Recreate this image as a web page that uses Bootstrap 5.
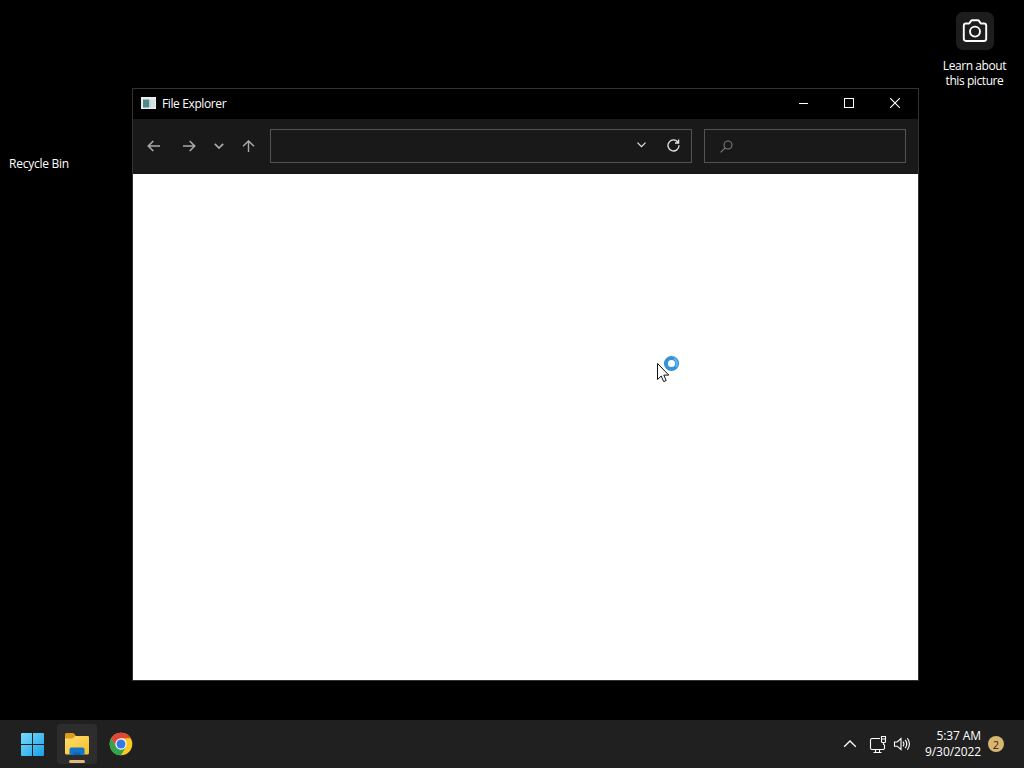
<!DOCTYPE html>
<html lang="en">
<head>
    <meta charset="UTF-8">
    <meta name="viewport" content="width=device-width, initial-scale=1.0">
    <title>Desktop - File Explorer</title>
    <!-- Bootstrap CSS -->
    <link href="https://cdn.jsdelivr.net/npm/bootstrap@5.3.0/dist/css/bootstrap.min.css" rel="stylesheet">
    <!-- Custom CSS -->
    <style>
        body {
            background-color: #000;
            color: #fff;
            font-family: "Open Sans", "Noto Sans", sans-serif;
            font-size: 12px;
            line-height: 15px;
        }
        svg {
            display: block;
            flex: none;
        }
        /* Desktop shortcuts */
        .desk-item {
            position: absolute;
            white-space: nowrap;
        }
        #recycleBin {
            left: 9px;
            top: 156px;
            letter-spacing: -0.25px;
        }
        #spotlight {
            left: 934px;
            top: 12px;
            width: 81px;
            letter-spacing: -0.42px;
        }
        .spot-tile {
            width: 38px;
            height: 38px;
            border-radius: 7px;
            background-color: #1d1d1d;
            margin-bottom: 8px;
        }
        /* Explorer window */
        #explorer {
            position: absolute;
            left: 132px;
            top: 88px;
            width: 787px;
            height: 593px;
            border: 1px solid #333;
        }
        .title-bar {
            height: 30px;
            padding-left: 8px;
            background-color: #000;
        }
        .title-icon {
            margin-bottom: 2px;
        }
        .title-text {
            margin-left: 6px;
            margin-bottom: 2px;
            letter-spacing: -0.38px;
        }
        .win-btn {
            width: 46px;
            height: 30px;
            padding-bottom: 2px;
        }
        .tool-bar {
            height: 55px;
            padding: 0 12px 1px 3px;
            background-color: #191919;
        }
        .nav-btn {
            width: 35px;
            height: 34px;
        }
        .nav-btn-sm {
            width: 25px;
        }
        .field-box {
            height: 34px;
            border: 1px solid #535353;
        }
        .address-box {
            width: 422px;
            margin-left: 4px;
            padding-right: 11px;
            padding-bottom: 2px;
            gap: 21px;
        }
        .search-box {
            width: 202px;
            padding-left: 15px;
        }
        #pointer {
            position: absolute;
            left: 655px;
            top: 354px;
        }
        /* Taskbar */
        .task-bar {
            height: 48px;
            background-color: #202020;
            padding-left: 13px;
            padding-right: 20px;
        }
        .task-btn {
            width: 40px;
            height: 40px;
            border-radius: 4px;
        }
        .task-btn.running {
            background-color: #2d2d2d;
        }
        .clock-text {
            line-height: 16px;
            width: 69px;
            letter-spacing: -0.1px;
        }
        .notif-count {
            width: 16px;
            height: 16px;
            margin-left: 7px;
            background-color: #d9b670;
            color: #2b2418;
            font-size: 11px;
        }
    </style>
</head>
<body class="vh-100 overflow-hidden d-flex flex-column">

    <!-- Desktop -->
    <main class="flex-grow-1">
        <div class="desk-item" id="recycleBin">Recycle Bin</div>

        <div class="desk-item d-flex flex-column align-items-center text-center" id="spotlight">
            <div class="spot-tile d-flex align-items-center justify-content-center">
                <svg width="26" height="24" viewBox="0 0 26 24" fill="none" stroke="#fff" stroke-width="1.9" stroke-linejoin="round">
                    <path d="M4 4.5H7.2L9 1.9Q9.4 1.3 10.2 1.3H15.8Q16.6 1.3 17 1.9L18.8 4.5H22Q24.2 4.5 24.2 6.7V19.8Q24.2 22 22 22H4Q1.8 22 1.8 19.8V6.7Q1.8 4.5 4 4.5Z"/>
                    <circle cx="13" cy="12.6" r="5"/>
                </svg>
            </div>
            <div>Learn about<br>this picture</div>
        </div>

        <!-- File Explorer window -->
        <div class="d-flex flex-column" id="explorer">
            <div class="title-bar d-flex align-items-center">
                <svg class="title-icon" width="15" height="12" viewBox="0 0 15 12">
                    <rect width="15" height="12" fill="#e9edf0"/>
                    <rect x="2" y="2.5" width="6" height="8" fill="#4f8b83"/>
                    <rect x="8" y="2.5" width="2.5" height="8" fill="#bcd5dd"/>
                    <rect x="11" y="2.5" width="3" height="8" fill="#d6dddf"/>
                </svg>
                <span class="title-text">File Explorer</span>
                <div class="d-flex ms-auto">
                    <div class="win-btn d-flex align-items-center justify-content-center">
                        <svg width="10" height="10"><path d="M1 5.5H11" stroke="#fff"/></svg>
                    </div>
                    <div class="win-btn d-flex align-items-center justify-content-center">
                        <svg width="10" height="10"><rect x=".5" y=".5" width="9" height="9" fill="none" stroke="#fff"/></svg>
                    </div>
                    <div class="win-btn d-flex align-items-center justify-content-center">
                        <svg width="10" height="10"><path d="M0 0L10 10M10 0L0 10" stroke="#fff" stroke-width="1.1"/></svg>
                    </div>
                </div>
            </div>

            <div class="tool-bar d-flex align-items-center">
                <div class="nav-btn d-flex align-items-center justify-content-center">
                    <svg width="14" height="12" viewBox="0 0 14 12" fill="none" stroke="#aaa" stroke-width="1.6"><path d="M13 6H1.5M6.3 1L1.3 6L6.3 11"/></svg>
                </div>
                <div class="nav-btn d-flex align-items-center justify-content-center">
                    <svg width="14" height="12" viewBox="0 0 14 12" fill="none" stroke="#aaa" stroke-width="1.6"><path d="M1 6H12.5M7.7 1L12.7 6L7.7 11"/></svg>
                </div>
                <div class="nav-btn nav-btn-sm d-flex align-items-center justify-content-center">
                    <svg width="10" height="6" viewBox="0 0 10 6" fill="none" stroke="#aaa" stroke-width="1.7"><path d="M.8 .8L5 5L9.2 .8"/></svg>
                </div>
                <div class="nav-btn d-flex align-items-center justify-content-center">
                    <svg width="13" height="12" viewBox="0 0 13 12" fill="none" stroke="#aaa" stroke-width="1.4"><path d="M6.5 12V1M1 6.3L6.5 .9L12 6.3"/></svg>
                </div>
                <div class="field-box address-box d-flex align-items-center justify-content-end">
                    <svg width="9" height="6" viewBox="0 0 9 6" fill="none" stroke="#e4e4e4" stroke-width="1.2"><path d="M.5 .7L4.5 4.7L8.5 .7"/></svg>
                    <svg width="13" height="13" viewBox="0 0 13 13" fill="none" stroke="#e4e4e4" stroke-width="1.3"><path d="M11.2 3.6A5.5 5.5 0 1 0 12 6.3M11.6 .4V4H8"/></svg>
                </div>
                <div class="field-box search-box d-flex align-items-center ms-auto">
                    <svg width="13" height="13" viewBox="0 0 13 13" fill="none" stroke="#7c7c7c" stroke-width="1.1"><circle cx="8" cy="5" r="4"/><path d="M5.2 7.8L.6 12.4"/></svg>
                </div>
            </div>

            <div class="bg-white flex-grow-1"></div>
        </div>

        <!-- Mouse pointer with busy ring -->
        <svg id="pointer" width="28" height="30" viewBox="0 0 28 30">
            <circle cx="16.5" cy="9.5" r="5.6" fill="none" stroke="#3593dc" stroke-width="4"/>
            <path d="M19 4.7A5.4 5.4 0 0 1 21 12.6" fill="none" stroke="#62b5ee" stroke-width="2"/>
            <path d="M2.5 9.5V25.5L6.2 22L8.7 27.6L11.2 26.5L8.8 21.1H13.8Z" fill="#fff" stroke="#111"/>
        </svg>
    </main>

    <!-- Taskbar -->
    <footer class="task-bar d-flex align-items-center">
        <div class="d-flex gap-1">
            <div class="task-btn d-flex align-items-center justify-content-center">
                <svg width="24" height="24" viewBox="0 0 24 24">
                    <defs>
                        <linearGradient id="winBlue" gradientUnits="userSpaceOnUse" x1="0" y1="0" x2="24" y2="24">
                            <stop offset="0" stop-color="#7bdcfb"/>
                            <stop offset="1" stop-color="#169fe8"/>
                        </linearGradient>
                    </defs>
                    <path fill="url(#winBlue)" d="M0 2Q0 1 1 1H11V12H0ZM12 1H22Q23 1 23 2V12H12ZM0 13H11V24H1Q0 24 0 23ZM12 13H23V23Q23 24 22 24H12Z"/>
                </svg>
            </div>
            <div class="task-btn running d-flex flex-column align-items-center justify-content-end">
                <svg width="40" height="40" viewBox="0 0 40 40">
                    <defs>
                        <linearGradient id="folderFront" x1="0" y1="0" x2="1" y2="1">
                            <stop offset="0" stop-color="#ffdf70"/>
                            <stop offset="1" stop-color="#f7bf28"/>
                        </linearGradient>
                    </defs>
                    <path d="M8 12V10.5Q8 9 9.5 9H15.5Q16.5 9 17.2 9.8L19 12H31Q32 12 32 14V20H8Z" fill="#dc9d19"/>
                    <path d="M8 14.5H14.5Q15.8 14.5 16.8 13.4L18 12H30.5Q32 12 32 13.5V29Q32 30.5 30.5 30.5H9.5Q8 30.5 8 29Z" fill="url(#folderFront)"/>
                    <path d="M12.5 31V25.5Q12.5 23.5 14.5 23.5H25.5Q27.5 23.5 27.5 25.5V31Z" fill="#1277c9"/>
                    <path d="M16.5 31V28.5H23.5V31Z" fill="#0b65b4"/>
                    <rect x="12" y="36" width="16" height="3" rx="1.5" fill="#e0b878"/>
                </svg>
            </div>
            <div class="task-btn d-flex align-items-center justify-content-center">
                <svg width="24" height="24" viewBox="0 0 24 24">
                    <circle cx="12" cy="12" r="11.3" fill="#fbc91f"/>
                    <path d="M2.2 6.35A11.3 11.3 0 0 1 21.8 6.35H12L7.1 14.8Z" fill="#e2453a"/>
                    <path d="M2.2 6.35A11.3 11.3 0 0 0 12 23.3L16.9 14.8L7.1 14.8Z" fill="#32a350"/>
                    <circle cx="12" cy="12" r="5.7" fill="#fff"/>
                    <circle cx="12" cy="12" r="4.5" fill="#3478e5"/>
                </svg>
            </div>
        </div>

        <!-- Tray -->
        <div class="d-flex align-items-center ms-auto">
            <svg width="70" height="20" viewBox="0 0 70 20" fill="none" stroke="#fff" stroke-width="1.1">
                <path d="M2.2 12.8L8 7L13.8 12.8" stroke-width="1.3"/>
                <path d="M38 4.5H30Q28.5 4.5 28.5 6V14Q28.5 15.5 30 15.5H41Q42.5 15.5 42.5 14V10.5M31.5 18.5H39.5M33.5 15.5V18.5M37.5 15.5V18.5M39.5 2.5H43.5V7.5Q43.5 8.5 42.5 8.5H40.5Q39.5 8.5 39.5 7.5ZM39.5 5H43.5M41.5 8.5V11"/>
                <path d="M52.5 8V12.2H55.2L59 15.5V4.5L55.2 8ZM61 7.7Q62.8 10 61 12.3M63.2 5.9Q66.3 10 63.2 14.1M65.4 4.3Q69.4 10 65.4 15.7"/>
            </svg>
            <div class="clock-text text-end">5:37 AM<br>9/30/2022</div>
            <div class="notif-count rounded-circle d-flex align-items-center justify-content-center">2</div>
        </div>
    </footer>

<!-- JavaScript -->
<script src="https://cdn.jsdelivr.net/npm/bootstrap@5.3.0/dist/js/bootstrap.bundle.min.js"></script>
</body>
</html>
